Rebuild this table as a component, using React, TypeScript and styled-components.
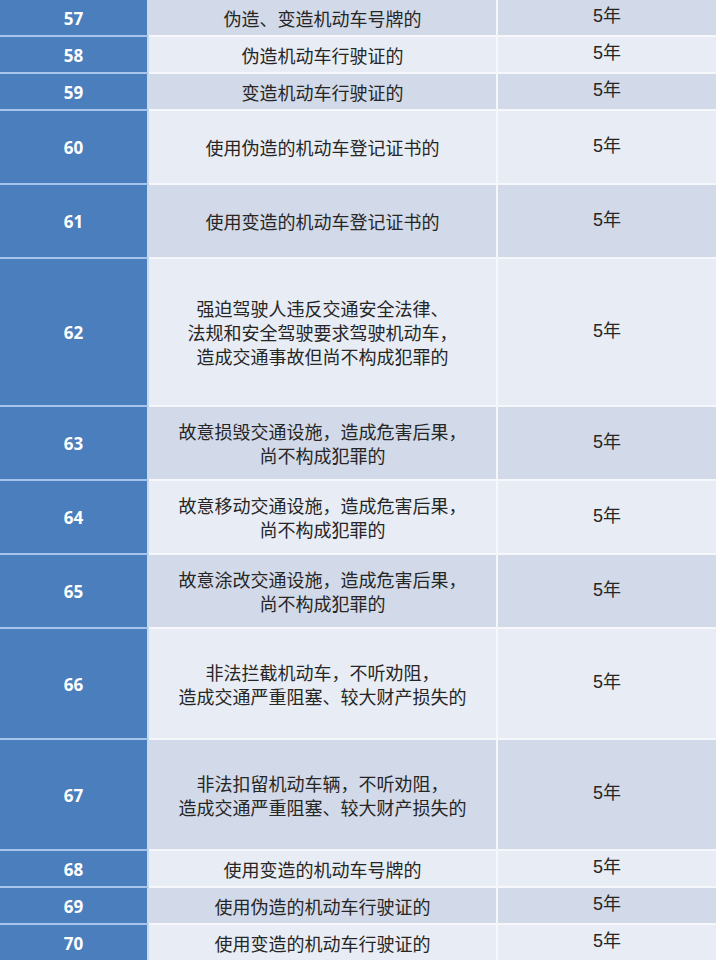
import React from "react";
import styled, { createGlobalStyle } from "styled-components";

type Item = {
  no: number;
  lines: string[];
  units: number;
};

const ROW_UNIT = 37;

const items: Item[] = [
  { no: 57, lines: ["伪造、变造机动车号牌的"], units: 1 },
  { no: 58, lines: ["伪造机动车行驶证的"], units: 1 },
  { no: 59, lines: ["变造机动车行驶证的"], units: 1 },
  { no: 60, lines: ["使用伪造的机动车登记证书的"], units: 2 },
  { no: 61, lines: ["使用变造的机动车登记证书的"], units: 2 },
  {
    no: 62,
    lines: [
      "强迫驾驶人违反交通安全法律、",
      "法规和安全驾驶要求驾驶机动车，",
      "造成交通事故但尚不构成犯罪的",
    ],
    units: 4,
  },
  { no: 63, lines: ["故意损毁交通设施，造成危害后果，", "尚不构成犯罪的"], units: 2 },
  { no: 64, lines: ["故意移动交通设施，造成危害后果，", "尚不构成犯罪的"], units: 2 },
  { no: 65, lines: ["故意涂改交通设施，造成危害后果，", "尚不构成犯罪的"], units: 2 },
  { no: 66, lines: ["非法拦截机动车，不听劝阻，", "造成交通严重阻塞、较大财产损失的"], units: 3 },
  { no: 67, lines: ["非法扣留机动车辆，不听劝阻，", "造成交通严重阻塞、较大财产损失的"], units: 3 },
  { no: 68, lines: ["使用变造的机动车号牌的"], units: 1 },
  { no: 69, lines: ["使用伪造的机动车行驶证的"], units: 1 },
  { no: 70, lines: ["使用变造的机动车行驶证的"], units: 1 },
];

export default function App() {
  return (
    <>
      <GlobalStyle />
      <Table>
        {items.map((item, i) => (
          <Row key={item.no} $height={item.units * ROW_UNIT}>
            <NumberCell>{item.no}</NumberCell>
            <TextCell $shaded={i % 2 === 0}>
              {item.lines.map((line) => (
                <Line key={line}>{line}</Line>
              ))}
            </TextCell>
            <TextCell $shaded={i % 2 === 0} $last>
              <Years>5年</Years>
            </TextCell>
          </Row>
        ))}
      </Table>
    </>
  );
}

const GlobalStyle = createGlobalStyle`
  html, body {
    margin: 0;
    padding: 0;
    background: #ffffff;
  }
  body {
    width: 720px;
    font-family: "Noto Sans CJK SC", "Noto Sans", sans-serif;
  }
`;

const Table = styled.div`
  width: 716px;
  display: flex;
  flex-direction: column;
`;

const Row = styled.div<{ $height: number }>`
  display: grid;
  grid-template-columns: 149px 349px 1fr;
  height: ${(p) => p.$height}px;
`;

const NumberCell = styled.div`
  display: flex;
  align-items: center;
  justify-content: center;
  background: #4b7ebd;
  border-right: 2px solid #c9dbf1;
  border-bottom: 2px solid #a7c5ea;
  color: #ffffff;
  font-family: "Open Sans", "Liberation Sans", sans-serif;
  font-weight: 700;
  font-size: 17px;
  padding-top: 1px;
`;

const TextCell = styled.div<{ $shaded: boolean; $last?: boolean }>`
  display: flex;
  flex-direction: column;
  align-items: center;
  justify-content: center;
  background: ${(p) => (p.$shaded ? "#d2d9e8" : "#e8ecf4")};
  border-bottom: 2px solid #f5f7fb;
  border-right: ${(p) => (p.$last ? "none" : "2px solid #f5f7fb")};
  color: #262626;
  font-size: 18px;
  line-height: 24px;
`;

const Line = styled.span`
  display: block;
  white-space: nowrap;
`;

const Years = styled.span`
  font-family: "Liberation Sans", "Noto Sans CJK SC", sans-serif;
  margin-bottom: 3px;
`;
